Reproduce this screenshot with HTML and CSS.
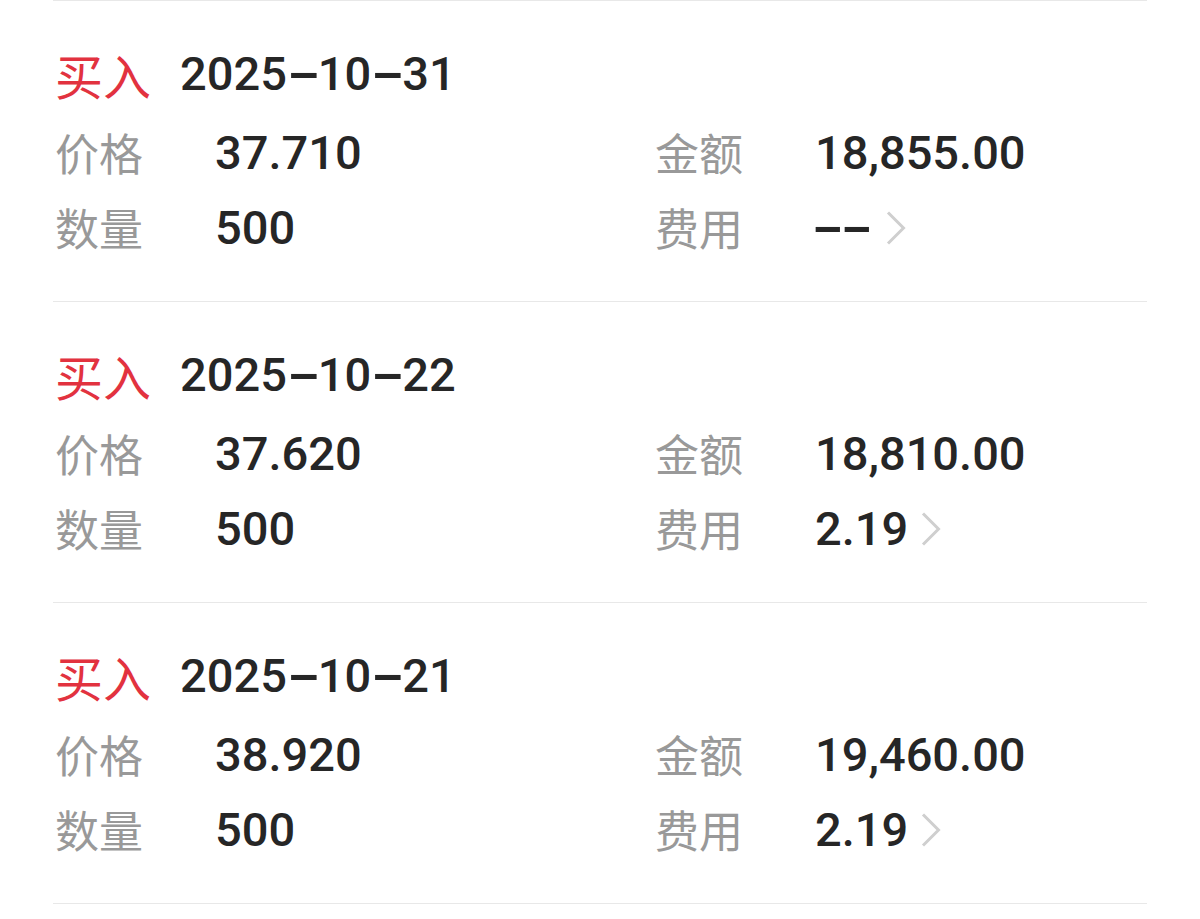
FILE: index.html
```html
<!DOCTYPE html>
<html lang="zh-CN">
<head>
<meta charset="utf-8">
<title>交易记录</title>
<link rel="stylesheet" href="styles.css">
</head>
<body>
<div class="list">
  <section class="card">
    <div class="title"><span class="side">买入</span><span class="date">2025<span class="hy">-</span>10<span class="hy">-</span>31</span></div>
    <div class="grid">
      <div class="field"><span class="label">价格</span><span class="value">37.710</span></div>
      <div class="field"><span class="label">金额</span><span class="value">18,855.00</span></div>
      <div class="field"><span class="label">数量</span><span class="value">500</span></div>
      <div class="field"><span class="label">费用</span><span class="value"><span class="hy fee">-</span><span class="hy fee">-</span></span><svg class="chev" width="20" height="34" viewBox="0 0 20 34"><polyline points="2,1.5 17.5,17 2,32.5" fill="none" stroke="#cfcfcf" stroke-width="3"/></svg></div>
    </div>
  </section>
  <section class="card">
    <div class="title"><span class="side">买入</span><span class="date">2025<span class="hy">-</span>10<span class="hy">-</span>22</span></div>
    <div class="grid">
      <div class="field"><span class="label">价格</span><span class="value">37.620</span></div>
      <div class="field"><span class="label">金额</span><span class="value">18,810.00</span></div>
      <div class="field"><span class="label">数量</span><span class="value">500</span></div>
      <div class="field"><span class="label">费用</span><span class="value">2.19</span><svg class="chev" width="20" height="34" viewBox="0 0 20 34"><polyline points="2,1.5 17.5,17 2,32.5" fill="none" stroke="#cfcfcf" stroke-width="3"/></svg></div>
    </div>
  </section>
  <section class="card">
    <div class="title"><span class="side">买入</span><span class="date">2025<span class="hy">-</span>10<span class="hy">-</span>21</span></div>
    <div class="grid">
      <div class="field"><span class="label">价格</span><span class="value">38.920</span></div>
      <div class="field"><span class="label">金额</span><span class="value">19,460.00</span></div>
      <div class="field"><span class="label">数量</span><span class="value">500</span></div>
      <div class="field"><span class="label">费用</span><span class="value">2.19</span><svg class="chev" width="20" height="34" viewBox="0 0 20 34"><polyline points="2,1.5 17.5,17 2,32.5" fill="none" stroke="#cfcfcf" stroke-width="3"/></svg></div>
    </div>
  </section>
  <div class="end"></div>
</div>
</body>
</html>
```
FILE: styles.css
```css
html, body {
  margin: 0;
  padding: 0;
  background: #ffffff;
}
body {
  font-family: Roboto, "Noto Sans CJK SC", sans-serif;
  color: #262626;
}
.list {
  margin: 0 53px;
}
.card {
  border-top: 1px solid #e8e8e8;
  padding: 43px 0 36px 2px;
}
.end {
  border-top: 1px solid #e8e8e8;
}
.title {
  display: flex;
  align-items: center;
  height: 60px;
  margin-bottom: 11px;
}
.side {
  font-family: "Noto Sans CJK SC", sans-serif;
  font-size: 48px;
  color: #e2323f;
  margin-right: 29px;
  line-height: 60px;
}
.date {
  font-family: Roboto, sans-serif;
  font-size: 47px;
  font-weight: 500;
  color: #262626;
  line-height: 60px;
}
.hy {
  display: inline-block;
  margin: 0 6px 0 9px;
  transform: scale(2.1, 1.15);
}
.hy.fee {
  margin: 0 8px 0 5px;
  transform: scale(2, 1.15);
}
.grid {
  display: grid;
  grid-template-columns: 600px 1fr;
  grid-auto-rows: 75px;
}
.field {
  display: flex;
  align-items: center;
}
.label {
  font-family: "Noto Sans CJK SC", sans-serif;
  font-size: 44px;
  color: #999999;
  width: 160px;
  flex: none;
  line-height: 75px;
}
.value {
  font-family: Roboto, sans-serif;
  font-size: 47px;
  font-weight: 500;
  color: #262626;
  line-height: 75px;
}
.chev {
  margin-left: 13px;
  flex: none;
}
```
